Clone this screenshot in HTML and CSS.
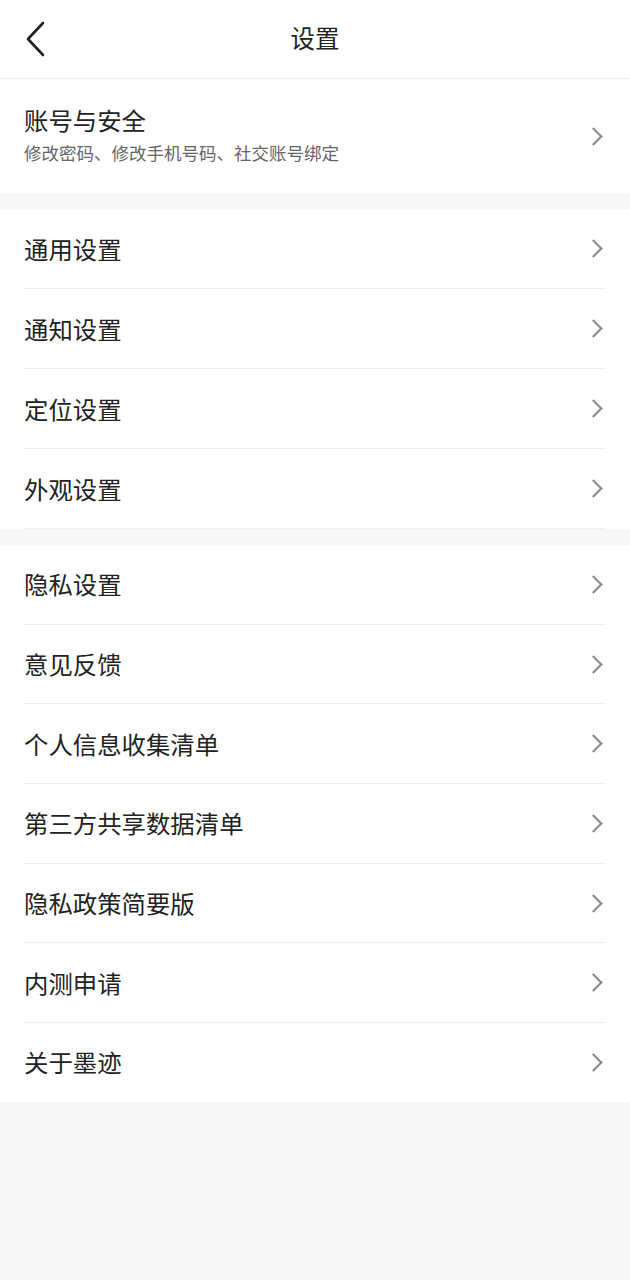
FILE: index.html
```html
<!DOCTYPE html>
<html lang="zh-CN">
<head>
  <meta charset="UTF-8">
  <title>设置</title>
  <link rel="stylesheet" href="styles.css">
</head>
<body>

<div class="top-bar">
  <button class="back-button">
    <svg width="22" height="36" viewBox="0 0 22 36"><path d="M19 2 L4 18 L19 34" fill="none" stroke="#222" stroke-width="2.6" stroke-linecap="round" stroke-linejoin="round"/></svg>
  </button>
  <h1>设置</h1>
</div>

<div class="group">
  <div class="item account">
    <div class="item-text">
      <div class="item-title">账号与安全</div>
      <div class="item-sub">修改密码、修改手机号码、社交账号绑定</div>
    </div>
    <span class="arrow"></span>
  </div>
</div>

<div class="group">
  <div class="item"><div class="item-title">通用设置</div><span class="arrow"></span></div>
  <div class="item"><div class="item-title">通知设置</div><span class="arrow"></span></div>
  <div class="item"><div class="item-title">定位设置</div><span class="arrow"></span></div>
  <div class="item"><div class="item-title">外观设置</div><span class="arrow"></span></div>
</div>

<div class="group long">
  <div class="item"><div class="item-title">隐私设置</div><span class="arrow"></span></div>
  <div class="item"><div class="item-title">意见反馈</div><span class="arrow"></span></div>
  <div class="item"><div class="item-title">个人信息收集清单</div><span class="arrow"></span></div>
  <div class="item"><div class="item-title">第三方共享数据清单</div><span class="arrow"></span></div>
  <div class="item"><div class="item-title">隐私政策简要版</div><span class="arrow"></span></div>
  <div class="item"><div class="item-title">内测申请</div><span class="arrow"></span></div>
  <div class="item last"><div class="item-title">关于墨迹</div><span class="arrow"></span></div>
</div>

</body>
</html>
```

FILE: styles.css
```css
body {
  margin: 0;
  background: #f7f7f7;
  font-family: "Noto Sans CJK SC", "Noto Sans", sans-serif;
  color: #222;
}
.top-bar {
  position: relative;
  height: 78px;
  background: #fff;
  border-bottom: 1px solid #eeeeee;
  display: flex;
  align-items: center;
  justify-content: center;
}
.top-bar h1 {
  margin: -4px 0 0;
  font-size: 24.5px;
  font-weight: normal;
  color: #222;
}
.back-button {
  position: absolute;
  left: 24px;
  top: 21px;
  padding: 0;
  border: none;
  background: transparent;
  cursor: pointer;
}
.group {
  background: #fff;
  margin-bottom: 16px;
}
.item {
  height: 79px;
  margin: 0 24px;
  border-bottom: 1px solid #efefef;
  display: flex;
  align-items: center;
  justify-content: space-between;
}
.group.long .item {
  height: 78.7px;
}
.item.last {
  border-bottom: none;
}
.item.account {
  height: 114px;
  border-bottom: none;
}
.item-title {
  font-size: 24.4px;
  line-height: 32px;
  color: #222;
}
.account .item-title {
  margin-top: -4px;
}
.item-sub {
  font-size: 17.5px;
  line-height: 22px;
  margin-top: 6px;
  color: #666;
}
.arrow {
  width: 11px;
  height: 11px;
  border-top: 2px solid #888;
  border-right: 2px solid #888;
  transform: rotate(45deg);
  margin-right: 6px;
}
```
